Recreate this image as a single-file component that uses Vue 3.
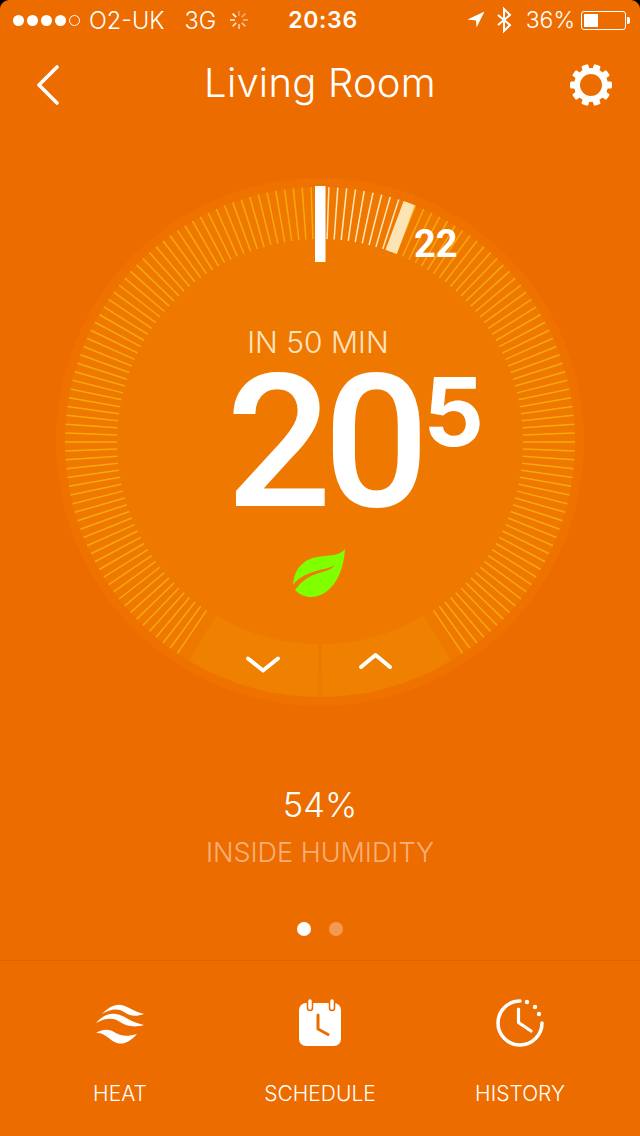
<template>
  <div class="screen">
    <!-- Status bar -->
    <div class="status">
      <div class="status-left">
        <span class="signal">
          <i v-for="n in 4" :key="n" class="dot" />
          <i class="dot empty" />
        </span>
        <span class="carrier">O2-UK</span>
        <span class="net">3G</span>
        <svg class="spinner" width="20" height="20" viewBox="0 0 20 20">
          <line
            v-for="s in spokes"
            :key="s.a"
            x1="10" y1="1" x2="10" y2="6"
            stroke="#fff"
            stroke-width="1.6"
            :stroke-opacity="s.o"
            :transform="`rotate(${s.a} 10 10)`"
          />
        </svg>
      </div>
      <div class="clock">20:36</div>
      <div class="status-right">
        <svg width="18" height="20" viewBox="0 0 18 20"><path d="M0.500 9.500 L17.500 1.500 L9.500 17.500 L9 10.500 Z" fill="#fff" /></svg>
        <svg class="bt" width="16" height="26" viewBox="0 0 16 26"><path d="M2 8 L14 18 L8 24 L8 2 L14 8 L2 18" fill="none" stroke="#fff" stroke-width="2" /></svg>
        <span class="pct">36%</span>
        <span class="battery"><span class="charge" /></span><span class="nub" />
      </div>
    </div>

    <!-- Header -->
    <div class="nav">
      <svg class="back" width="26" height="40" viewBox="0 0 26 40"><path d="M22 2 L4 20 L22 38" fill="none" stroke="#fff" stroke-width="3.600" stroke-linecap="round" stroke-linejoin="round" /></svg>
      <h1>Living Room</h1>
      <svg class="gear" width="44" height="44" viewBox="-22 -22 44 44">
        <rect v-for="a in teeth" :key="a" x="-3.500" y="-21" width="7" height="8" rx="1.500" fill="#fff" :transform="`rotate(${a})`" />
        <circle r="14" fill="none" stroke="#fff" stroke-width="6" />
      </svg>
    </div>

    <!-- Dial -->
    <div class="dial">
      <svg width="528" height="528" viewBox="-264 -264 528 528">
        <circle r="264" fill="#ef7200" />
        <circle r="255" fill="#ee7800" />
        <line
          v-for="t in ticks"
          :key="t.a"
          x1="0" y1="-255" x2="0" y2="-203"
          :stroke="t.on ? '#ffe6ba' : '#f7a90a'"
          stroke-width="1.500"
          :transform="`rotate(${t.a})`"
        />
        <rect x="-5" y="-256" width="10.500" height="76" fill="#fff" />
        <rect x="-6" y="-255" width="12" height="52" fill="#fde4b4" transform="rotate(20.500)" />
        <path :d="wedgeLeft" fill="#ef8000" />
        <path :d="wedgeRight" fill="#ef8000" />
        <path d="M-72 216.500 L-57 228.500 L-42 216.500" fill="none" stroke="#fff" stroke-width="4" stroke-linecap="round" stroke-linejoin="round" />
        <path d="M41 225 L55.500 213 L70 225" fill="none" stroke="#fff" stroke-width="4" stroke-linecap="round" stroke-linejoin="round" />
        <g transform="translate(-27 107)">
          <path d="M52 0 C48 5 42 6 32 7 C16 8 2 14 0 36 C6 28 12 26 20 23 C28 20 36 20 42 16 C37 22 28 23 23 25 C14 28 8 33 2 41 C8 47 14 48 18 48 C34 48 50 32 52 0 Z" fill="#7fff00" />
        </g>
      </svg>
      <div class="goal">22</div>
      <div class="readout">
        <div class="eta">IN 50 MIN</div>
        <div class="temp">20<sup>5</sup></div>
      </div>
    </div>

    <!-- Humidity -->
    <div class="humidity">
      <div class="hum-value">54%</div>
      <div class="hum-label">INSIDE HUMIDITY</div>
    </div>

    <div class="pager">
      <i class="page active" />
      <i class="page" />
    </div>

    <!-- Tabs -->
    <div class="tabs">
      <div class="tab">
        <svg width="48" height="50" viewBox="0 -6 48 50">
          <path d="M6 10 C12 4 18 0 25 1 C32 2 36 7 48 10 C40 13 33 12 28 8 C22 4 14 5 6 10 Z" fill="#fff" />
          <path d="M0 19 C6 12 13 9 20 10 C28 11 34 18 48 21 C38 24 30 22 24 18 C17 13 9 14 0 19 Z" fill="#fff" />
          <path d="M0 29 C7 25 13 25 18 28 C24 32 31 33 41 30 C34 38 27 41 21 39 C14 37 9 28 0 29 Z" fill="#fff" />
        </svg>
        <span>HEAT</span>
      </div>
      <div class="tab">
        <svg width="46" height="50" viewBox="0 0 46 50">
          <rect x="2" y="5" width="42" height="43" rx="7" fill="#fff" />
          <rect x="10.500" y="0.500" width="5" height="12" rx="2.500" fill="#fff" stroke="#ed6c00" stroke-width="1.500" />
          <rect x="32.500" y="0.500" width="5" height="12" rx="2.500" fill="#fff" stroke="#ed6c00" stroke-width="1.500" />
          <path d="M21 17 V31 L31 36.500" fill="none" stroke="#ed6c00" stroke-width="3" stroke-linecap="round" stroke-linejoin="round" />
        </svg>
        <span>SCHEDULE</span>
      </div>
      <div class="tab">
        <svg width="50" height="50" viewBox="0 0 50 50">
          <path d="M25 3 A22 22 0 1 0 47 25" fill="none" stroke="#fff" stroke-width="3.500" stroke-linecap="round" />
          <circle cx="32" cy="4" r="2.200" fill="#fff" />
          <circle cx="40" cy="9" r="2.200" fill="#fff" />
          <circle cx="44" cy="16" r="2.200" fill="#fff" />
          <path d="M23.500 11 V24.500 L36 33" fill="none" stroke="#fff" stroke-width="3.200" stroke-linecap="round" stroke-linejoin="round" />
        </svg>
        <span>HISTORY</span>
      </div>
    </div>
  </div>
</template>

<script setup>
const spokes = Array.from({ length: 8 }, (_, i) => ({ a: i * 45, o: 0.35 + i * 0.09 }))
const teeth = Array.from({ length: 10 }, (_, i) => 18 + i * 36)

// ticks every 2 degrees, both ways round from the top, bottom left free for the buttons
const ticks = []
for (let a = -146; a <= 146; a += 2) {
  if (a === 0) continue
  ticks.push({ a, on: a > 0 && a <= 20 })
}

function polar(r, deg) {
  const rad = (deg * Math.PI) / 180
  return [r * Math.sin(rad), -r * Math.cos(rad)]
}

function wedge(from, to) {
  const [x1, y1] = polar(255, from)
  const [x2, y2] = polar(255, to)
  const [x3, y3] = polar(202, to)
  const [x4, y4] = polar(202, from)
  const sweep = to > from ? 1 : 0
  return `M${x1} ${y1} A255 255 0 0 ${sweep} ${x2} ${y2} L${x3} ${y3} A202 202 0 0 ${1 - sweep} ${x4} ${y4} Z`
}

const wedgeLeft = wedge(180.5, 211)
const wedgeRight = wedge(149, 179.5)
</script>

<style>
html, body { background: #000; }
</style>

<style scoped>
.screen {
  width: 640px;
  height: 1136px;
  display: flex;
  flex-direction: column;
  background: #ed6c00;
  border-radius: 9px 9px 0 0;
  color: #fff;
  font-family: Inter, "Liberation Sans", sans-serif;
  overflow: hidden;
}
.status {
  height: 40px;
  display: grid;
  grid-template-columns: 1fr auto 1fr;
  align-items: center;
  padding: 0 10px 0 13px;
  font-size: 23.500px;
}
.status-left, .status-right { display: flex; align-items: center; }
.status-right { justify-content: flex-end; }
.signal { display: flex; gap: 3px; margin-right: 9px; }
.dot { width: 11px; height: 11px; border-radius: 50%; background: #fff; box-sizing: border-box; }
.dot.empty { background: none; border: 1px solid #fff; }
.carrier { margin-right: 20px; font-weight: 300; }
.net { margin-right: 13px; font-weight: 300; }
.clock { font-weight: 600; font-size: 23px; letter-spacing: 0.7px; margin-left: 3px; }
.bt { margin: 0 14px 0 11px; }
.pct { font-weight: 300; margin-right: 6px; font-size: 23px; }
.battery { border: 1px solid #fff; border-radius: 3px; padding: 2px; display: block; width: 39px; height: 13px; }
.charge { display: block; width: 14px; height: 13px; background: #fff; }
.nub { width: 3px; height: 7px; background: #fff; margin-left: 1px; border-radius: 0 2px 2px 0; }

.nav {
  height: 82px;
  display: grid;
  grid-template-columns: 1fr auto 1fr;
  align-items: center;
  padding: 4px 27px 0;
}
.back { margin-left: 8px; }
.gear { justify-self: end; }
.nav h1 { margin: 0 0 6px; font-size: 40px; font-weight: 300; letter-spacing: 0.2px; }

.dial { position: relative; width: 528px; height: 528px; margin: 52px auto 0; }
.dial svg { display: block; }
.goal { position: absolute; left: 358px; top: 44px; font-size: 38px; font-weight: 700; font-family: Roboto, sans-serif; }
.readout { position: absolute; left: 0; right: 0; top: 146px; text-align: center; }
.eta { font-size: 30px; line-height: 36px; font-weight: 300; color: #fde4c0; margin-right: 4px; }
.temp { font-family: Roboto, sans-serif; font-weight: 500; font-size: 186px; line-height: 164px; letter-spacing: -8px; padding-left: 70px; }
.temp sup { font-family: Inter, sans-serif; font-size: 95px; font-weight: 700; line-height: 0; vertical-align: 60px; margin-left: 2px; letter-spacing: 0; }

.humidity { text-align: center; margin-top: 78px; }
.hum-value { font-size: 34.500px; font-weight: 300; }
.hum-label { font-size: 27px; font-weight: 300; color: #f7b07a; margin-top: 11px; }

.pager { display: flex; justify-content: center; gap: 18px; margin-top: 53px; }
.page { width: 14px; height: 14px; border-radius: 50%; background: #f39a50; }
.page.active { background: #fff; }

.tabs {
  margin-top: 24px;
  border-top: 1px solid #e06200;
  flex: 1;
  display: grid;
  grid-template-columns: repeat(3, 1fr);
  padding: 0 20px;
}
.tab { display: flex; flex-direction: column; align-items: center; padding-top: 37px; font-size: 21px; font-weight: 300; }
.tab svg { display: block; margin-bottom: 33px; }
</style>
